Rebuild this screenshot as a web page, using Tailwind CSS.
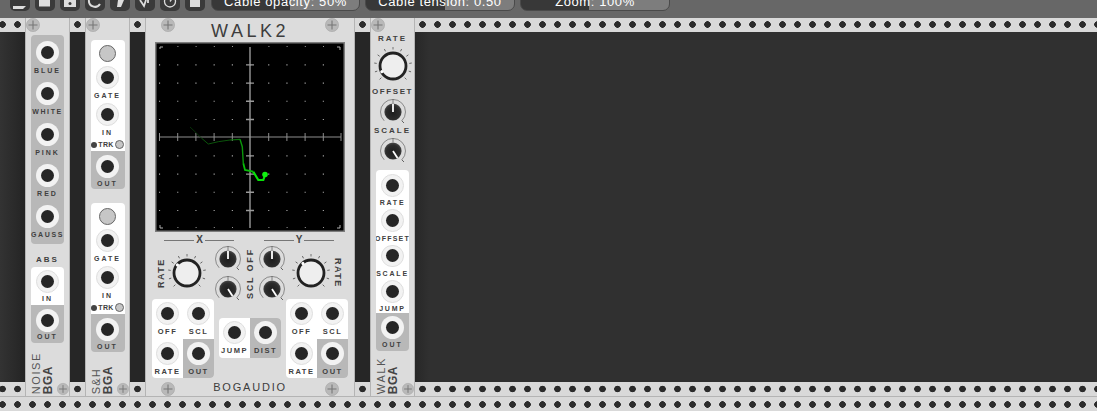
<!DOCTYPE html>
<html>
<head>
<title>Rack</title>
<script src="https://cdn.jsdelivr.net/npm/@tailwindcss/browser@4"></script>
</head>
<body class="bg-[#303030]">
<!-- shared knob parts -->
<svg width="0" height="0" class="absolute">
  <defs>
    <symbol id="plus" viewBox="0 0 14 14">
      <circle cx="7" cy="7" r="6.6" fill="#b9b9b9" stroke="#a6a6a6" stroke-width="0.6"/>
      <path d="M7 2.5V11.5M2.5 7H11.5" stroke="#777" stroke-width="1.1"/>
    </symbol>
    <symbol id="bigticks" viewBox="0 0 40 40">
      <g stroke="#555" stroke-width="0.8">
        <path d="M20 1V3.5" transform="rotate(-135 20 20)"/><path d="M20 1V3.5" transform="rotate(-108 20 20)"/>
        <path d="M20 1V3.5" transform="rotate(-81 20 20)"/><path d="M20 1V3.5" transform="rotate(-54 20 20)"/>
        <path d="M20 1V3.5" transform="rotate(-27 20 20)"/><path d="M20 1V3.5"/>
        <path d="M20 1V3.5" transform="rotate(27 20 20)"/><path d="M20 1V3.5" transform="rotate(54 20 20)"/>
        <path d="M20 1V3.5" transform="rotate(81 20 20)"/><path d="M20 1V3.5" transform="rotate(108 20 20)"/>
        <path d="M20 1V3.5" transform="rotate(135 20 20)"/>
      </g>
      <circle cx="20" cy="20" r="13" fill="#eeeeee" stroke="#222" stroke-width="2.8"/>
    </symbol>
    <radialGradient id="kn" cx="50%" cy="55%" r="55%">
      <stop offset="0" stop-color="#1e1e1e"/><stop offset="0.7" stop-color="#2c2c2c"/><stop offset="1" stop-color="#4a4a4a"/>
    </radialGradient>
    <symbol id="smallbase" viewBox="0 0 30 30">
      <path d="M6.2 23.8A12.5 12.5 0 1 1 23.8 23.8" fill="none" stroke="#666" stroke-width="0.7"/>
      <path d="M15 2V6" stroke="#666" stroke-width="0.8"/>
      <path d="M23.8 23.8L26 26" stroke="#555" stroke-width="0.9"/>
      <circle cx="15" cy="15" r="8.6" fill="url(#kn)"/>
    </symbol>
  </defs>
</svg>

<div class="w-[1097px] h-[411px] overflow-hidden flex flex-col font-['Liberation_Sans',sans-serif]">

  <!-- toolbar, cut off by the window top -->
  <div class="h-[18px] shrink-0 overflow-hidden bg-[#676767] flex items-end gap-[5px] pl-[10px] pb-[7px]">
    <div class="w-[20px] h-[22px] shrink-0 rounded-[5px] bg-[#3a3a3a] flex items-end"><svg width="20" height="11" viewBox="0 0 20 11"><path d="M3 6H16L13 9H3Z" fill="#ddd"/></svg></div>
    <div class="w-[20px] h-[22px] shrink-0 rounded-[5px] bg-[#3a3a3a] flex items-end"><svg width="20" height="11" viewBox="0 0 20 11"><path d="M4 0H15V6.500H4Z" fill="#ddd"/></svg></div>
    <div class="w-[20px] h-[22px] shrink-0 rounded-[5px] bg-[#3a3a3a] flex items-end"><svg width="20" height="11" viewBox="0 0 20 11"><path d="M4 0H16V7H4Z" fill="#ddd"/><circle cx="10" cy="3.500" r="1.500" fill="#3a3a3a"/></svg></div>
    <div class="w-[20px] h-[22px] shrink-0 rounded-[5px] bg-[#3a3a3a] flex items-end"><svg width="20" height="11" viewBox="0 0 20 11"><path d="M4 0A6 6 0 0 0 15 4" fill="none" stroke="#ddd" stroke-width="2"/></svg></div>
    <div class="w-[20px] h-[22px] shrink-0 rounded-[5px] bg-[#3a3a3a] flex items-end"><svg width="20" height="11" viewBox="0 0 20 11"><path d="M8 0H14L11 7H7Z" fill="#ddd"/></svg></div>
    <div class="w-[20px] h-[22px] shrink-0 rounded-[5px] bg-[#3a3a3a] flex items-end"><svg width="20" height="11" viewBox="0 0 20 11"><path d="M5 0L9 6L11 0M13 0V3" fill="none" stroke="#ddd" stroke-width="1.800"/></svg></div>
    <div class="w-[20px] h-[22px] shrink-0 rounded-[5px] bg-[#3a3a3a] flex items-end"><svg width="20" height="11" viewBox="0 0 20 11"><circle cx="10" cy="1.500" r="5.500" fill="none" stroke="#ddd" stroke-width="1.300"/><path d="M10 1.500L12.500 -2" stroke="#ddd" stroke-width="1.300"/></svg></div>
    <div class="w-[20px] h-[22px] shrink-0 rounded-[5px] bg-[#3a3a3a] flex items-end"><svg width="20" height="11" viewBox="0 0 20 11"><path d="M5 0H15V7H5Z" fill="#ddd"/></svg></div>
    <div class="ml-[1px] w-[149px] h-[22px] shrink-0 rounded-[7px] border border-[#4a4a4a] bg-[linear-gradient(to_right,#383838_78px,#7d7d7d_78px)] flex items-end justify-center text-white text-[13px] leading-[15px] pb-[1px] tracking-[0.6px] whitespace-nowrap">Cable opacity: 50%</div>
    <div class="w-[150px] h-[22px] shrink-0 rounded-[7px] border border-[#4a4a4a] bg-[linear-gradient(to_right,#383838_79px,#7d7d7d_79px)] flex items-end justify-center text-white text-[13px] leading-[15px] pb-[1px] tracking-[0.6px] whitespace-nowrap">Cable tension: 0.50</div>
    <div class="w-[150px] h-[22px] shrink-0 rounded-[7px] border border-[#4a4a4a] bg-[linear-gradient(to_right,#383838_68px,#7d7d7d_68px)] flex items-end justify-center text-white text-[13px] leading-[15px] pb-[1px] tracking-[0.6px] whitespace-nowrap">Zoom: 100%</div>
  </div>

  <!-- rack row -->
  <div class="h-[378px] shrink-0 flex">

    <!-- gap 0-25 -->
    <div class="w-[25px] shrink-0 flex flex-col">
      <div class="h-[14px] bg-[#d9d9d9] bg-[radial-gradient(circle_at_7.5px_6.5px,#2b2b2b_3px,transparent_3.6px)] bg-[length:15px_14px] bg-[position:-5px_0]"></div>
      <div class="flex-1 bg-[linear-gradient(to_right,#333_0%,#242424_100%)]"></div>
      <div class="h-[14px] bg-[#d9d9d9] bg-[radial-gradient(circle_at_7.5px_7px,#2b2b2b_3px,transparent_3.6px)] bg-[length:15px_14px] bg-[position:-5px_0]"></div>
    </div>

    <!-- NOISE -->
    <div class="w-[45px] shrink-0 bg-[#dcdcdc] border-x border-[#b4b4b4] flex flex-col items-center">
      <div class="w-full h-[14px] pl-0"><svg width="14" height="14"><use href="#plus"/></svg></div>
      <div class="mt-[3px] w-[33px] h-[209px] rounded-[4px] bg-[#b8b8b8] pt-[6px] flex flex-col items-center">
        <div class="w-[23px] h-[23px] rounded-full bg-[#f2f2f2] flex items-center justify-center"><div class="w-[13px] h-[13px] rounded-full bg-[#262626]"></div></div>
        <div class="mt-[3px] mb-[7px] h-[8px] text-[7px] leading-[8px] font-bold tracking-[2px] text-[#404040] whitespace-nowrap">BLUE</div>
        <div class="w-[23px] h-[23px] rounded-full bg-[#f2f2f2] flex items-center justify-center"><div class="w-[13px] h-[13px] rounded-full bg-[#262626]"></div></div>
        <div class="mt-[3px] mb-[7px] h-[8px] text-[7px] leading-[8px] font-bold tracking-[1.6px] text-[#404040] whitespace-nowrap">WHITE</div>
        <div class="w-[23px] h-[23px] rounded-full bg-[#f2f2f2] flex items-center justify-center"><div class="w-[13px] h-[13px] rounded-full bg-[#262626]"></div></div>
        <div class="mt-[3px] mb-[7px] h-[8px] text-[7px] leading-[8px] font-bold tracking-[2px] text-[#404040] whitespace-nowrap">PINK</div>
        <div class="w-[23px] h-[23px] rounded-full bg-[#f2f2f2] flex items-center justify-center"><div class="w-[13px] h-[13px] rounded-full bg-[#262626]"></div></div>
        <div class="mt-[3px] mb-[7px] h-[8px] text-[7px] leading-[8px] font-bold tracking-[2px] text-[#404040] whitespace-nowrap">RED</div>
        <div class="w-[23px] h-[23px] rounded-full bg-[#f2f2f2] flex items-center justify-center"><div class="w-[13px] h-[13px] rounded-full bg-[#262626]"></div></div>
        <div class="mt-[3px] h-[8px] text-[7px] leading-[8px] font-bold tracking-[1.6px] text-[#404040] whitespace-nowrap">GAUSS</div>
      </div>
      <div class="mt-[12px] h-[8px] text-[8px] leading-[8px] font-bold tracking-[2px] text-[#404040]">ABS</div>
      <div class="mt-[3px] w-[33px] h-[76px] rounded-[4px] overflow-hidden flex flex-col">
        <div class="h-[38px] bg-white flex flex-col items-center pt-[3px]">
          <div class="w-[23px] h-[23px] rounded-full bg-[#f2f2f2] border border-[#dedede] flex items-center justify-center"><div class="w-[13px] h-[13px] rounded-full bg-[#262626]"></div></div>
          <div class="mt-[2px] h-[8px] text-[7px] leading-[8px] font-bold tracking-[2px] text-[#404040]">IN</div>
        </div>
        <div class="h-[38px] bg-[#b8b8b8] flex flex-col items-center pt-[4px]">
          <div class="w-[23px] h-[23px] rounded-full bg-[#f2f2f2] flex items-center justify-center"><div class="w-[13px] h-[13px] rounded-full bg-[#262626]"></div></div>
          <div class="mt-[1px] h-[8px] text-[7px] leading-[8px] font-bold tracking-[2px] text-[#404040]">OUT</div>
        </div>
      </div>
      <div class="mt-auto w-full h-[46px] flex items-end pl-[4px]">
        <div class="[writing-mode:vertical-rl] rotate-180 w-[12px] text-[11px] leading-[12px] tracking-[1.6px] text-[#555] mb-[2px]">NOISE</div>
        <div class="[writing-mode:vertical-rl] rotate-180 w-[12px] text-[12px] leading-[12px] font-bold tracking-[0.5px] text-[#444] mb-[2px]">BGA</div>
        <svg width="14" height="14" class="ml-[3px]"><use href="#plus"/></svg>
      </div>
    </div>

    <!-- gap 70-85 -->
    <div class="w-[15px] shrink-0 flex flex-col">
      <div class="h-[14px] bg-[#d9d9d9] bg-[radial-gradient(circle_at_7.5px_6.5px,#2b2b2b_3px,transparent_3.6px)] bg-[length:15px_14px]"></div>
      <div class="flex-1 bg-[#262626]"></div>
      <div class="h-[14px] bg-[#d9d9d9] bg-[radial-gradient(circle_at_7.5px_7px,#2b2b2b_3px,transparent_3.6px)] bg-[length:15px_14px]"></div>
    </div>

    <!-- S&H -->
    <div class="w-[45px] shrink-0 bg-[#dcdcdc] border-x border-[#b4b4b4] flex flex-col items-center">
      <div class="w-full h-[14px]"><svg width="14" height="14"><use href="#plus"/></svg></div>
      <div class="mt-[8px] w-[34px] h-[149px] rounded-[4px] overflow-hidden flex flex-col">
        <div class="h-[111px] bg-white flex flex-col items-center pt-[5px]">
          <div class="w-[17px] h-[17px] rounded-full bg-[#c6c6c6] border border-[#666]"></div>
          <div class="mt-[4px] w-[23px] h-[23px] rounded-full bg-[#f2f2f2] border border-[#dedede] flex items-center justify-center"><div class="w-[13px] h-[13px] rounded-full bg-[#262626]"></div></div>
          <div class="mt-[3px] h-[8px] text-[7px] leading-[8px] font-bold tracking-[2px] text-[#404040]">GATE</div>
          <div class="mt-[3px] w-[23px] h-[23px] rounded-full bg-[#f2f2f2] border border-[#dedede] flex items-center justify-center"><div class="w-[13px] h-[13px] rounded-full bg-[#262626]"></div></div>
          <div class="mt-[3px] h-[8px] text-[7px] leading-[8px] font-bold tracking-[2px] text-[#404040]">IN</div>
          <div class="mt-[3px] w-full flex items-center justify-center h-[9px]">
            <div class="w-[6px] h-[6px] rounded-full bg-[#444] mr-[1px]"></div>
            <div class="text-[7px] leading-[9px] font-bold text-[#404040] tracking-[0.3px]">TRK</div>
            <div class="w-[9px] h-[9px] rounded-full bg-[#c6c6c6] border border-[#666] ml-[1px]"></div>
          </div>
        </div>
        <div class="h-[38px] bg-[#b8b8b8] flex flex-col items-center pt-[4px]">
          <div class="w-[23px] h-[23px] rounded-full bg-[#f2f2f2] flex items-center justify-center"><div class="w-[13px] h-[13px] rounded-full bg-[#262626]"></div></div>
          <div class="mt-[2px] h-[8px] text-[7px] leading-[8px] font-bold tracking-[2px] text-[#404040]">OUT</div>
        </div>
      </div>
      <div class="mt-[14px] w-[34px] h-[149px] rounded-[4px] overflow-hidden flex flex-col">
        <div class="h-[111px] bg-white flex flex-col items-center pt-[5px]">
          <div class="w-[17px] h-[17px] rounded-full bg-[#c6c6c6] border border-[#666]"></div>
          <div class="mt-[4px] w-[23px] h-[23px] rounded-full bg-[#f2f2f2] border border-[#dedede] flex items-center justify-center"><div class="w-[13px] h-[13px] rounded-full bg-[#262626]"></div></div>
          <div class="mt-[3px] h-[8px] text-[7px] leading-[8px] font-bold tracking-[2px] text-[#404040]">GATE</div>
          <div class="mt-[3px] w-[23px] h-[23px] rounded-full bg-[#f2f2f2] border border-[#dedede] flex items-center justify-center"><div class="w-[13px] h-[13px] rounded-full bg-[#262626]"></div></div>
          <div class="mt-[3px] h-[8px] text-[7px] leading-[8px] font-bold tracking-[2px] text-[#404040]">IN</div>
          <div class="mt-[3px] w-full flex items-center justify-center h-[9px]">
            <div class="w-[6px] h-[6px] rounded-full bg-[#444] mr-[1px]"></div>
            <div class="text-[7px] leading-[9px] font-bold text-[#404040] tracking-[0.3px]">TRK</div>
            <div class="w-[9px] h-[9px] rounded-full bg-[#c6c6c6] border border-[#666] ml-[1px]"></div>
          </div>
        </div>
        <div class="h-[38px] bg-[#b8b8b8] flex flex-col items-center pt-[4px]">
          <div class="w-[23px] h-[23px] rounded-full bg-[#f2f2f2] flex items-center justify-center"><div class="w-[13px] h-[13px] rounded-full bg-[#262626]"></div></div>
          <div class="mt-[2px] h-[8px] text-[7px] leading-[8px] font-bold tracking-[2px] text-[#404040]">OUT</div>
        </div>
      </div>
      <div class="mt-auto w-full h-[40px] flex items-end pl-[4px]">
        <div class="[writing-mode:vertical-rl] rotate-180 w-[12px] text-[11px] leading-[12px] tracking-[1.2px] text-[#555] mb-[2px]">S&amp;H</div>
        <div class="[writing-mode:vertical-rl] rotate-180 w-[12px] text-[12px] leading-[12px] font-bold tracking-[0.5px] text-[#444] mb-[2px]">BGA</div>
        <svg width="14" height="14" class="ml-[3px]"><use href="#plus"/></svg>
      </div>
    </div>

    <!-- gap 130-145 -->
    <div class="w-[15px] shrink-0 flex flex-col">
      <div class="h-[14px] bg-[#d9d9d9] bg-[radial-gradient(circle_at_7.5px_6.5px,#2b2b2b_3px,transparent_3.6px)] bg-[length:15px_14px]"></div>
      <div class="flex-1 bg-[#262626]"></div>
      <div class="h-[14px] bg-[#d9d9d9] bg-[radial-gradient(circle_at_7.5px_7px,#2b2b2b_3px,transparent_3.6px)] bg-[length:15px_14px]"></div>
    </div>

    <!-- WALK2 -->
    <div class="w-[210px] shrink-0 bg-[#dcdcdc] border-x border-[#b4b4b4] flex flex-col">
      <div class="h-[24px] flex justify-between px-[15px]">
        <svg width="14" height="14"><use href="#plus"/></svg>
        <div class="pt-[3px] text-[18px] leading-[20px] tracking-[3.5px] text-[#3d3d3d]">WALK2</div>
        <svg width="14" height="14"><use href="#plus"/></svg>
      </div>
      <svg width="190" height="190" viewBox="0 0 190 190" class="ml-[9px] shrink-0">
        <rect x="0.750" y="0.750" width="188.500" height="188.500" fill="#000" stroke="#7d7d7d" stroke-width="1.500"/>
        <!-- dots -->
        <g fill="#9a9a9a">
          <path d="M22.400 4h1v1h-1zM40.600 4h1v1h-1zM58.800 4h1v1h-1zM77 4h1v1h-1zM113.400 4h1v1h-1zM131.600 4h1v1h-1zM149.800 4h1v1h-1zM168 4h1v1h-1z"/>
          <path d="M22.400 185h1v1h-1zM40.600 185h1v1h-1zM58.800 185h1v1h-1zM77 185h1v1h-1zM113.400 185h1v1h-1zM131.600 185h1v1h-1zM149.800 185h1v1h-1zM168 185h1v1h-1z"/>
        </g>
        <g stroke="#b0b0b0" stroke-width="1.100" stroke-dasharray="1.100 17.100">
          <path d="M4 22.900H186"/><path d="M4 41.100H186"/><path d="M4 59.300H186"/><path d="M4 77.500H186"/>
          <path d="M4 113.900H186"/><path d="M4 132.100H186"/><path d="M4 150.300H186"/><path d="M4 168.500H186"/>
        </g>
        <path d="M4 95H186" stroke="#8e8e8e" stroke-width="1.200"/>
        <path d="M95 5V186" stroke="#9a9a9a" stroke-width="1.400"/>
        <path d="M4.500 91V99M22.700 91V99M40.900 91V99M59.100 91V99M77.300 91V99M113.700 91V99M131.900 91V99M150.100 91V99M168.300 91V99M186 91V99" stroke="#8e8e8e" stroke-width="1"/>
        <path d="M91 22.900H99M91 41.100H99M91 59.300H99M91 77.500H99M91 113.900H99M91 132.100H99M91 150.300H99M91 168.500H99" stroke="#9a9a9a" stroke-width="1.400"/>
        <path d="M5 7V5H8M182 5H185V8M5 183V186H8M182 186H185V183" fill="none" stroke="#b0b0b0" stroke-width="1"/>
        <!-- trace -->
        <path d="M35 85L40 89.700L46.700 96.300" fill="none" stroke="#0a3d0a" stroke-width="0.800"/>
        <path d="M46.700 96.300L53.300 102L63.300 99.700L75 98" fill="none" stroke="#0b540b" stroke-width="1"/>
        <path d="M75 98L85 97.300" fill="none" stroke="#0b700b" stroke-width="1.200"/>
        <path d="M85 97.300L87.300 104.700L88.300 121.300" fill="none" stroke="#0a960a" stroke-width="1.400"/>
        <path d="M88.300 121.300L90 128L98.300 129.700" fill="none" stroke="#08bd08" stroke-width="1.800"/>
        <path d="M98.300 129.700L103.300 138L108.300 138L110 133" fill="none" stroke="#08e008" stroke-width="2.200"/>
        <circle cx="110" cy="132.500" r="2.800" fill="#10f010"/>
      </svg>
      <!-- X / Y heading -->
      <div class="mt-[4px] h-[8px] flex items-center px-[18px] text-[10px] leading-[8px] font-bold text-[#444]">
        <div class="w-[30px] h-[1px] bg-[#777]"></div>
        <div class="w-[11px] text-center">X</div>
        <div class="w-[29px] h-[1px] bg-[#777]"></div>
        <div class="w-[30px]"></div>
        <div class="w-[30px] h-[1px] bg-[#777]"></div>
        <div class="w-[10px] text-center">Y</div>
        <div class="w-[30px] h-[1px] bg-[#777]"></div>
      </div>
      <!-- knobs -->
      <div class="h-[55px] flex items-start">
        <div class="ml-[9px] w-[12px] h-[50px] mt-[4px] flex items-center justify-center [writing-mode:vertical-rl] rotate-180 text-[9px] leading-[12px] font-bold tracking-[1.5px] text-[#404040]">RATE</div>
        <svg width="40" height="40" viewBox="0 0 40 40" class="mt-[9px]"><use href="#bigticks"/><circle cx="20" cy="7.500" r="1.600" fill="#fff" transform="rotate(-50 20 20)"/></svg>
        <div class="ml-[6px] w-[30px] flex flex-col">
          <svg width="30" height="30" viewBox="0 0 30 30"><use href="#smallbase"/><path d="M15 15V7" stroke="#fff" stroke-width="1.800"/></svg>
          <svg width="30" height="30" viewBox="0 0 30 30"><use href="#smallbase"/><path d="M15 15L19.500 22" stroke="#fff" stroke-width="1.800"/></svg>
        </div>
        <div class="w-[14px] h-[60px] flex items-center justify-center [writing-mode:vertical-rl] rotate-180 text-[9px] leading-[14px] font-bold tracking-[1.8px] text-[#404040] whitespace-nowrap">SCL OFF</div>
        <div class="w-[30px] flex flex-col">
          <svg width="30" height="30" viewBox="0 0 30 30"><use href="#smallbase"/><path d="M15 15V7" stroke="#fff" stroke-width="1.800"/></svg>
          <svg width="30" height="30" viewBox="0 0 30 30"><use href="#smallbase"/><path d="M15 15L19.500 22" stroke="#fff" stroke-width="1.800"/></svg>
        </div>
        <svg width="40" height="40" viewBox="0 0 40 40" class="ml-[4px] mt-[9px]"><use href="#bigticks"/><circle cx="20" cy="7.500" r="1.600" fill="#fff" transform="rotate(-40 20 20)"/></svg>
        <div class="ml-[1px] w-[12px] h-[50px] mt-[4px] flex items-center justify-center [writing-mode:vertical-rl] text-[9px] leading-[12px] font-bold tracking-[1.5px] text-[#404040]">RATE</div>
      </div>
      <!-- port panels -->
      <div class="h-[79px] px-[6px] flex items-center justify-between">
        <div class="w-[62px] h-[79px] rounded-[4px] overflow-hidden grid grid-cols-2 grid-rows-2 bg-white">
          <div class="flex flex-col items-center pt-[3px]"><div class="w-[23px] h-[23px] rounded-full bg-[#f2f2f2] border border-[#dedede] flex items-center justify-center"><div class="w-[13px] h-[13px] rounded-full bg-[#262626]"></div></div><div class="mt-[3px] h-[8px] text-[7.500px] leading-[8px] font-bold tracking-[1.500px] text-[#404040]">OFF</div></div>
          <div class="flex flex-col items-center pt-[3px]"><div class="w-[23px] h-[23px] rounded-full bg-[#f2f2f2] border border-[#dedede] flex items-center justify-center"><div class="w-[13px] h-[13px] rounded-full bg-[#262626]"></div></div><div class="mt-[3px] h-[8px] text-[7.500px] leading-[8px] font-bold tracking-[1.500px] text-[#404040]">SCL</div></div>
          <div class="flex flex-col items-center pt-[3px]"><div class="w-[23px] h-[23px] rounded-full bg-[#f2f2f2] border border-[#dedede] flex items-center justify-center"><div class="w-[13px] h-[13px] rounded-full bg-[#262626]"></div></div><div class="mt-[3px] h-[8px] text-[7.500px] leading-[8px] font-bold tracking-[1.500px] text-[#404040]">RATE</div></div>
          <div class="flex flex-col items-center pt-[3px] bg-[#b8b8b8]"><div class="w-[23px] h-[23px] rounded-full bg-[#f2f2f2] flex items-center justify-center"><div class="w-[13px] h-[13px] rounded-full bg-[#262626]"></div></div><div class="mt-[3px] h-[8px] text-[7.500px] leading-[8px] font-bold tracking-[1.500px] text-[#404040]">OUT</div></div>
        </div>
        <div class="w-[62px] h-[40px] mt-[-1px] rounded-[4px] overflow-hidden grid grid-cols-2 bg-white">
          <div class="flex flex-col items-center pt-[3px]"><div class="w-[23px] h-[23px] rounded-full bg-[#f2f2f2] border border-[#dedede] flex items-center justify-center"><div class="w-[13px] h-[13px] rounded-full bg-[#262626]"></div></div><div class="mt-[3px] h-[8px] text-[7.500px] leading-[8px] font-bold tracking-[1.500px] text-[#404040]">JUMP</div></div>
          <div class="flex flex-col items-center pt-[3px] bg-[#b8b8b8]"><div class="w-[23px] h-[23px] rounded-full bg-[#f2f2f2] flex items-center justify-center"><div class="w-[13px] h-[13px] rounded-full bg-[#262626]"></div></div><div class="mt-[3px] h-[8px] text-[7.500px] leading-[8px] font-bold tracking-[1.500px] text-[#404040]">DIST</div></div>
        </div>
        <div class="w-[62px] h-[79px] rounded-[4px] overflow-hidden grid grid-cols-2 grid-rows-2 bg-white">
          <div class="flex flex-col items-center pt-[3px]"><div class="w-[23px] h-[23px] rounded-full bg-[#f2f2f2] border border-[#dedede] flex items-center justify-center"><div class="w-[13px] h-[13px] rounded-full bg-[#262626]"></div></div><div class="mt-[3px] h-[8px] text-[7.500px] leading-[8px] font-bold tracking-[1.500px] text-[#404040]">OFF</div></div>
          <div class="flex flex-col items-center pt-[3px]"><div class="w-[23px] h-[23px] rounded-full bg-[#f2f2f2] border border-[#dedede] flex items-center justify-center"><div class="w-[13px] h-[13px] rounded-full bg-[#262626]"></div></div><div class="mt-[3px] h-[8px] text-[7.500px] leading-[8px] font-bold tracking-[1.500px] text-[#404040]">SCL</div></div>
          <div class="flex flex-col items-center pt-[3px]"><div class="w-[23px] h-[23px] rounded-full bg-[#f2f2f2] border border-[#dedede] flex items-center justify-center"><div class="w-[13px] h-[13px] rounded-full bg-[#262626]"></div></div><div class="mt-[3px] h-[8px] text-[7.500px] leading-[8px] font-bold tracking-[1.500px] text-[#404040]">RATE</div></div>
          <div class="flex flex-col items-center pt-[3px] bg-[#b8b8b8]"><div class="w-[23px] h-[23px] rounded-full bg-[#f2f2f2] flex items-center justify-center"><div class="w-[13px] h-[13px] rounded-full bg-[#262626]"></div></div><div class="mt-[3px] h-[8px] text-[7.500px] leading-[8px] font-bold tracking-[1.500px] text-[#404040]">OUT</div></div>
        </div>
      </div>
      <div class="flex-1 flex items-end justify-between px-[15px]">
        <svg width="14" height="14"><use href="#plus"/></svg>
        <div class="mb-[3px] text-[11px] leading-[12px] tracking-[1.800px] text-[#3d3d3d]">BOGAUDIO</div>
        <svg width="14" height="14"><use href="#plus"/></svg>
      </div>
    </div>

    <!-- gap 355-370 -->
    <div class="w-[15px] shrink-0 flex flex-col">
      <div class="h-[14px] bg-[#d9d9d9] bg-[radial-gradient(circle_at_7.5px_6.5px,#2b2b2b_3px,transparent_3.6px)] bg-[length:15px_14px]"></div>
      <div class="flex-1 bg-[#262626]"></div>
      <div class="h-[14px] bg-[#d9d9d9] bg-[radial-gradient(circle_at_7.5px_7px,#2b2b2b_3px,transparent_3.6px)] bg-[length:15px_14px]"></div>
    </div>

    <!-- WALK -->
    <div class="w-[45px] shrink-0 bg-[#dcdcdc] border-x border-[#b4b4b4] flex flex-col items-center">
      <div class="w-full h-[14px]"><svg width="14" height="14"><use href="#plus"/></svg></div>
      <div class="mt-[3px] h-[8px] text-[8px] leading-[8px] font-bold tracking-[2px] text-[#404040]">RATE</div>
      <svg width="40" height="40" viewBox="0 0 40 40" class="mt-[3px] shrink-0"><use href="#bigticks"/><circle cx="20" cy="7.500" r="1.600" fill="#fff" transform="rotate(-117 20 20)"/></svg>
      <div class="mt-[2px] h-[8px] text-[8px] leading-[8px] font-bold tracking-[1.600px] text-[#404040]">OFFSET</div>
      <svg width="30" height="30" viewBox="0 0 30 30" class="mt-[1px] shrink-0"><use href="#smallbase"/><path d="M15 15V7" stroke="#fff" stroke-width="1.800"/></svg>
      <div class="h-[8px] mt-[0px] text-[8px] leading-[8px] font-bold tracking-[2px] text-[#404040]">SCALE</div>
      <svg width="30" height="30" viewBox="0 0 30 30" class="mt-[1px] shrink-0"><use href="#smallbase"/><path d="M15 15L19.500 22" stroke="#fff" stroke-width="1.800"/></svg>
      <div class="mt-[4px] w-[33px] h-[181px] rounded-[4px] overflow-hidden flex flex-col shrink-0">
        <div class="h-[143px] bg-white flex flex-col items-center pt-[4px]">
          <div class="w-[23px] h-[23px] rounded-full bg-[#f2f2f2] border border-[#dedede] flex items-center justify-center"><div class="w-[13px] h-[13px] rounded-full bg-[#262626]"></div></div>
          <div class="mt-[2.500px] mb-[2px] h-[8px] text-[7px] leading-[8px] font-bold tracking-[1.800px] text-[#404040]">RATE</div>
          <div class="w-[23px] h-[23px] rounded-full bg-[#f2f2f2] border border-[#dedede] flex items-center justify-center"><div class="w-[13px] h-[13px] rounded-full bg-[#262626]"></div></div>
          <div class="mt-[2.500px] mb-[2px] h-[8px] text-[7px] leading-[8px] font-bold tracking-[1.200px] text-[#404040]">OFFSET</div>
          <div class="w-[23px] h-[23px] rounded-full bg-[#f2f2f2] border border-[#dedede] flex items-center justify-center"><div class="w-[13px] h-[13px] rounded-full bg-[#262626]"></div></div>
          <div class="mt-[2.500px] mb-[2px] h-[8px] text-[7px] leading-[8px] font-bold tracking-[1.800px] text-[#404040]">SCALE</div>
          <div class="w-[23px] h-[23px] rounded-full bg-[#f2f2f2] border border-[#dedede] flex items-center justify-center"><div class="w-[13px] h-[13px] rounded-full bg-[#262626]"></div></div>
          <div class="mt-[2.500px] h-[8px] text-[7px] leading-[8px] font-bold tracking-[1.800px] text-[#404040]">JUMP</div>
        </div>
        <div class="h-[38px] bg-[#b8b8b8] flex flex-col items-center pt-[3px]">
          <div class="w-[23px] h-[23px] rounded-full bg-[#f2f2f2] flex items-center justify-center"><div class="w-[13px] h-[13px] rounded-full bg-[#262626]"></div></div>
          <div class="mt-[2px] h-[8px] text-[7px] leading-[8px] font-bold tracking-[2px] text-[#404040]">OUT</div>
        </div>
      </div>
      <div class="mt-auto w-full h-[38px] flex items-end pl-[4px]">
        <div class="[writing-mode:vertical-rl] rotate-180 w-[12px] text-[11px] leading-[12px] tracking-[1.600px] text-[#555] mb-[2px]">WALK</div>
        <div class="[writing-mode:vertical-rl] rotate-180 w-[12px] text-[12px] leading-[12px] font-bold tracking-[0.5px] text-[#444] mb-[2px]">BGA</div>
        <svg width="14" height="14" class="ml-[3px]"><use href="#plus"/></svg>
      </div>
    </div>

    <!-- rest of the rack -->
    <div class="flex-1 flex flex-col">
      <div class="h-[14px] bg-[#d9d9d9] bg-[radial-gradient(circle_at_7.5px_6.5px,#2b2b2b_3px,transparent_3.6px)] bg-[length:15px_14px]"></div>
      <div class="flex-1 bg-[linear-gradient(to_right,#272727_0px,#303030_14px)]"></div>
      <div class="h-[14px] bg-[#d9d9d9] bg-[radial-gradient(circle_at_7.5px_7px,#2b2b2b_3px,transparent_3.6px)] bg-[length:15px_14px]"></div>
    </div>
  </div>

  <!-- next rack row -->
  <div class="flex-1 border-t border-[#b4b4b4] bg-[#d9d9d9] bg-[radial-gradient(circle_at_7.5px_7.5px,#2b2b2b_3px,transparent_3.6px)] bg-[length:15px_15px] bg-[position:-5px_0]"></div>
</div>
</body>
</html>
